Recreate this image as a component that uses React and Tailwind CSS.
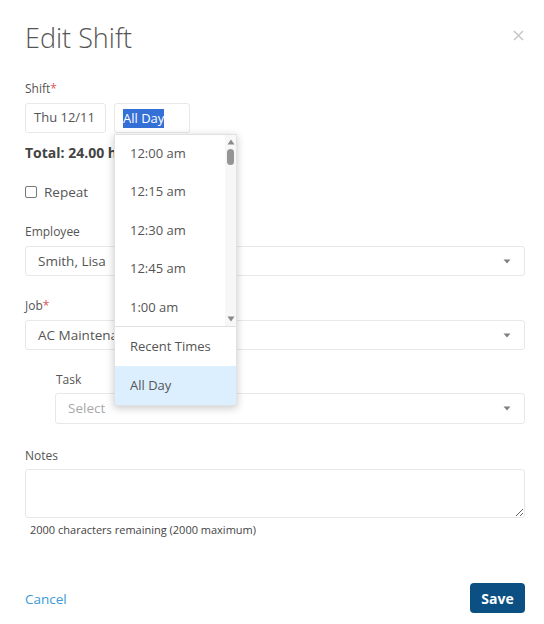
import React from "react";

function Caret() {
  return (
    <svg width="8" height="5" viewBox="0 0 8 5" className="shrink-0">
      <path d="M0.5 0.5 L7.5 0.5 L4 4.5 Z" fill="#808080" />
    </svg>
  );
}

function SelectBox({ children, placeholder, tall }) {
  return (
    <div className={(tall ? "h-[31px]" : "h-[30px]") + " border border-[#e8e8e8] rounded-[3px] flex items-center justify-between pl-[12px] pr-[13px] bg-white"}>
      <span className={placeholder ? "text-[13.5px] text-[#a8a8a8]" : "text-[13.5px] text-[#555]"}>{children}</span>
      <Caret />
    </div>
  );
}

function Label({ children, req }) {
  return (
    <div className="text-[12px] leading-[16px] text-[#555]">
      {children}
      {req && <span className="text-[#e0565b]">*</span>}
    </div>
  );
}

export default function App() {
  const times = ["12:00 am", "12:15 am", "12:30 am", "12:45 am", "1:00 am"];
  return (
    <div className="w-[544px] h-[624px] bg-white relative font-['Open_Sans',sans-serif] text-[#555] overflow-hidden">
      <div className="pl-[25px] pr-[19px]">
        <div className="flex justify-between items-start">
          <h1 className="mt-[19px] text-[27px] leading-[38px] font-light text-[#555]">Edit Shift</h1>
          <svg width="11" height="11" viewBox="0 0 11 11" className="mt-[30px] mr-[1px]">
            <path d="M1 1 L10 10 M10 1 L1 10" stroke="#c8c8c8" strokeWidth="1.6" />
          </svg>
        </div>

        <div className="mt-[24px]">
          <Label req>Shift</Label>
        </div>
        <div className="relative mt-[6px]">
          <div className="flex gap-[8px]">
            <div className="w-[81px] h-[30px] border border-[#e8e8e8] rounded-[3px] flex items-center pl-[8px] text-[13px] text-[#555]">
              Thu 12/11
            </div>
            <div className="w-[76px] h-[30px] border border-[#e8e8e8] rounded-[3px] flex items-center pl-[8px] text-[13px]">
              <span className="bg-[#3470d6] text-white leading-[19px]">All Day</span>
            </div>
          </div>

          {/* dropdown */}
          <div className="absolute left-[89px] top-[31px] w-[123px] bg-white z-10 shadow-[0_2px_8px_rgba(0,0,0,0.22)] border border-[#e2e2e2]">
            <div className="flex h-[192px] border-b border-[#e0e0e0]">
              <div className="flex-1">
                {times.map((t) => (
                  <div key={t} className="h-[38.4px] flex items-center pb-[1px] pl-[15px] text-[13px] text-[#555]">
                    {t}
                  </div>
                ))}
              </div>
              <div className="w-[11px] bg-[#f7f7f7] flex flex-col items-center pt-[4px] pb-[4px]">
                <svg width="8" height="6" viewBox="0 0 8 6">
                  <path d="M0.5 5.5 L7.5 5.5 L4 0.5 Z" fill="#8a8a8a" />
                </svg>
                <div className="w-[7px] h-[16px] rounded-full bg-[#959595] mt-[4px]" />
                <div className="flex-1" />
                <svg width="8" height="6" viewBox="0 0 8 6">
                  <path d="M0.5 0.5 L7.5 0.5 L4 5.5 Z" fill="#8a8a8a" />
                </svg>
              </div>
            </div>
            <div className="h-[39px] flex items-center pt-[1px] pl-[15px] text-[13px] text-[#555]">Recent Times</div>
            <div className="h-[39px] flex items-center pt-[1px] pl-[15px] text-[13px] text-[#555] bg-[#dcefff]">All Day</div>
          </div>
        </div>

        <div className="mt-[9px] h-[20px] flex items-center text-[14px] font-bold text-[#444]">Total: 24.00 hrs</div>

        <div className="mt-[20px] h-[20px] flex items-center gap-[7px]">
          <div className="w-[12px] h-[12px] border border-[#777] rounded-[2px] bg-white" />
          <span className="text-[13.5px] text-[#555]">Repeat</span>
        </div>

        <div className="mt-[22px]">
          <Label>Employee</Label>
          <div className="mt-[6px]">
            <SelectBox>Smith, Lisa</SelectBox>
          </div>
        </div>

        <div className="mt-[22px]">
          <Label req>Job</Label>
          <div className="mt-[6px]">
            <SelectBox>AC Maintenance</SelectBox>
          </div>
        </div>

        <div className="mt-[22px] pl-[30px]">
          <div className="pl-[1px]">
            <Label>Task</Label>
          </div>
          <div className="mt-[5px]">
            <SelectBox placeholder tall>Select</SelectBox>
          </div>
        </div>

        <div className="mt-[24px]">
          <Label>Notes</Label>
          <textarea className="mt-[5px] block w-full h-[49px] border border-[#e8e8e8] rounded-[3px] resize-y outline-none" />
          <div className="mt-[4px] pl-[5px] text-[11px] leading-[16px] text-[#444]">
            2000 characters remaining (2000 maximum)
          </div>
        </div>

        <div className="mt-[45px] flex items-center justify-between">
          <span className="mt-[3px] text-[13.5px] text-[#3d9ad6]">Cancel</span>
          <button className="w-[55px] h-[30px] rounded-[4px] bg-[#0b4f83] text-white text-[14px] font-bold">Save</button>
        </div>
      </div>
    </div>
  );
}
